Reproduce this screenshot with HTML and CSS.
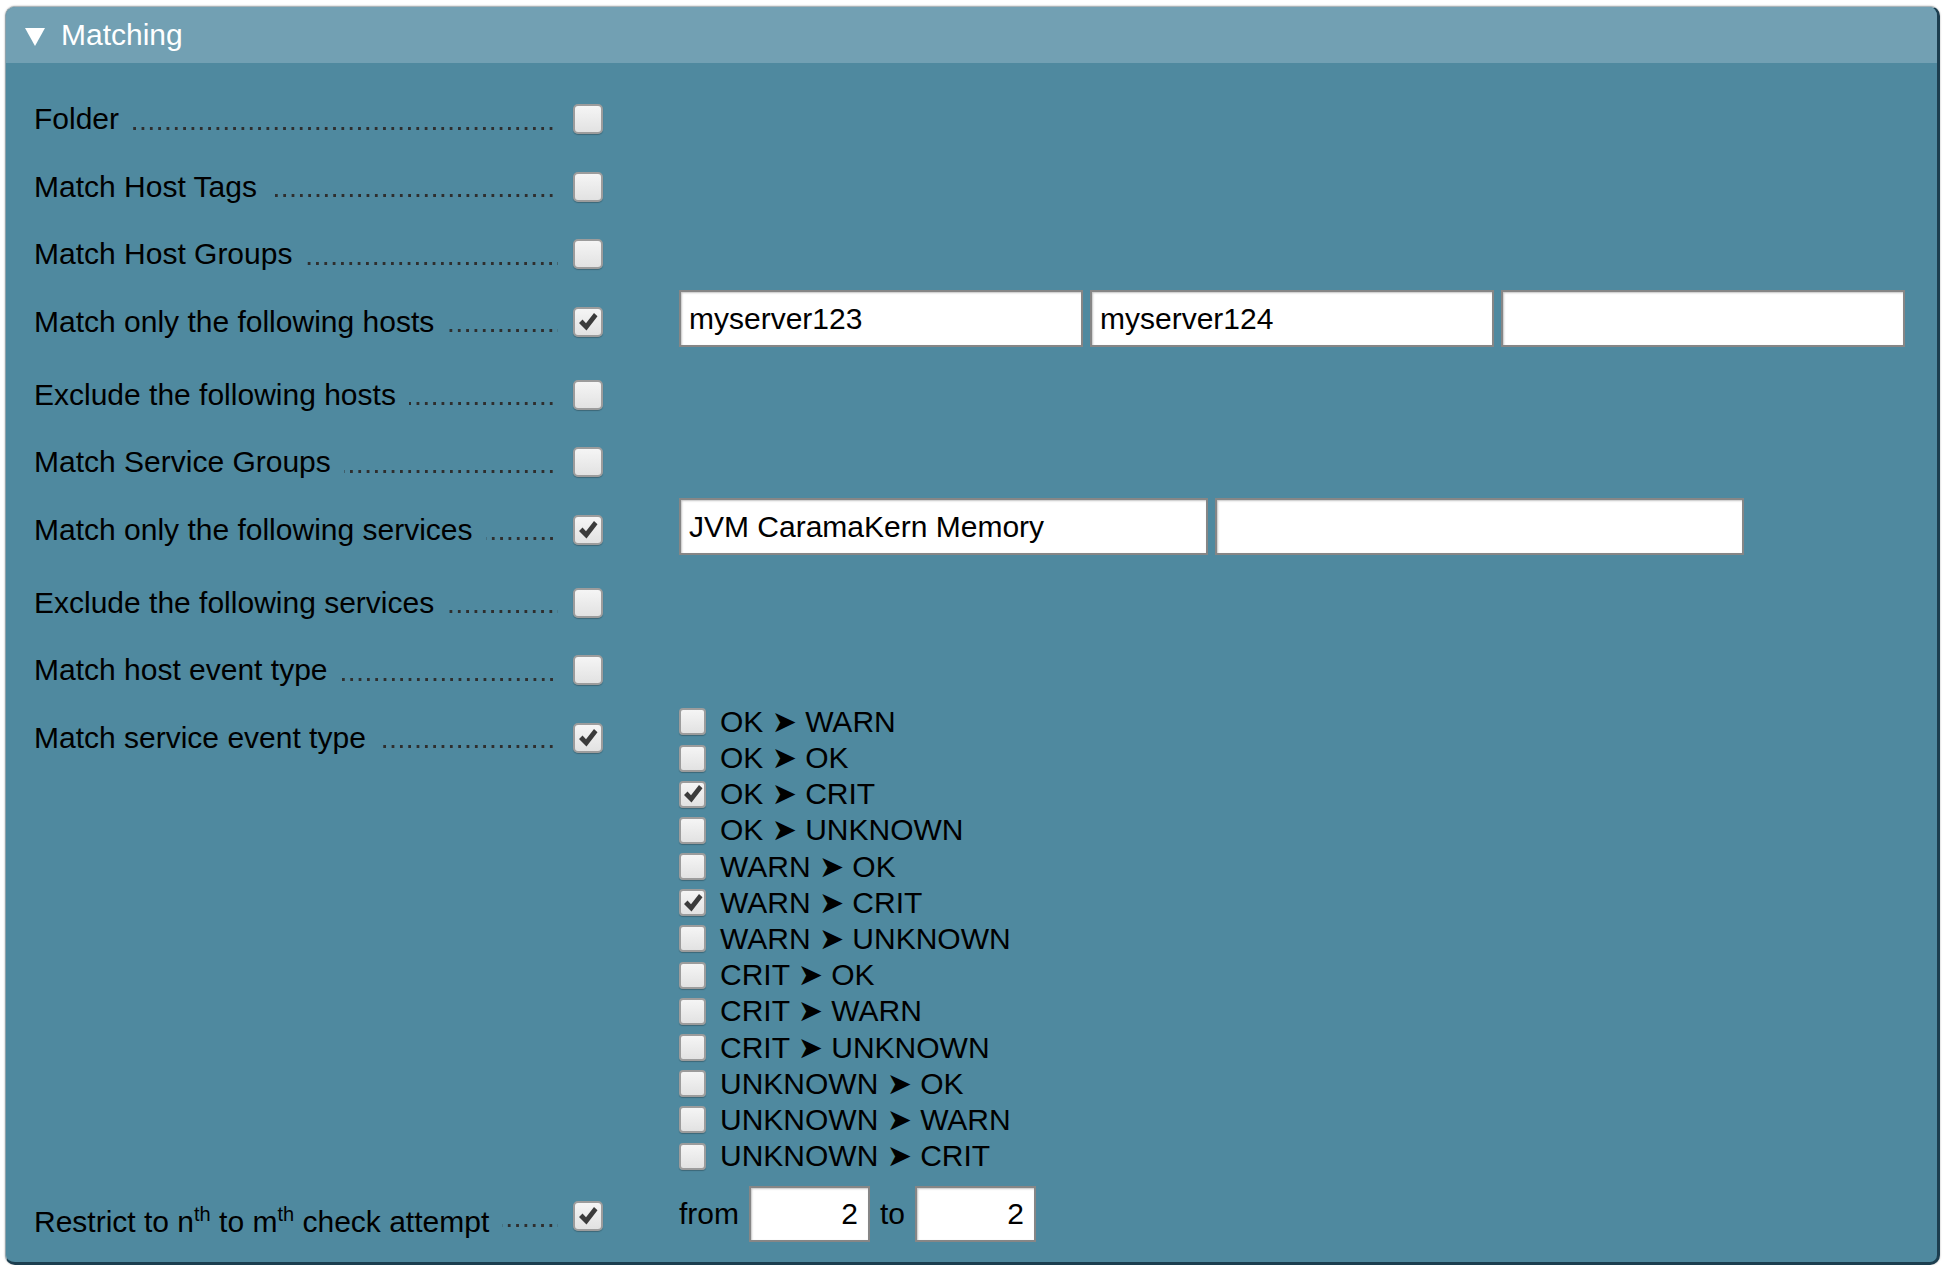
FILE: index.html
```html
<!DOCTYPE html>
<html>
<head>
<meta charset="utf-8">
<link rel="stylesheet" href="styles.css">
</head>
<body>
<div class="panel">
  <div class="head"><span class="tri"></span><span class="htitle">Matching</span></div>
  <div class="body">

    <div class="row">
      <div class="legend"><span class="title">Folder</span><span class="dots"></span><span class="cb"></span></div>
    </div>
    <div class="row">
      <div class="legend"><span class="title">Match Host Tags</span><span class="dots"></span><span class="cb"></span></div>
    </div>
    <div class="row">
      <div class="legend"><span class="title">Match Host Groups</span><span class="dots"></span><span class="cb"></span></div>
    </div>
    <div class="row inputs">
      <div class="legend"><span class="title">Match only the following hosts</span><span class="dots"></span><span class="cb on"><svg viewBox="0 0 20 20"><polygon points="1,11 4.5,7.5 8,11.2 16,1 19.5,4.2 8.5,18.5"/></svg></span></div>
      <div class="content">
        <input class="txt host" type="text" value="myserver123">
        <input class="txt host" type="text" value="myserver124">
        <input class="txt host" type="text" value="">
      </div>
    </div>
    <div class="row">
      <div class="legend"><span class="title">Exclude the following hosts</span><span class="dots"></span><span class="cb"></span></div>
    </div>
    <div class="row">
      <div class="legend"><span class="title">Match Service Groups</span><span class="dots"></span><span class="cb"></span></div>
    </div>
    <div class="row inputs">
      <div class="legend"><span class="title">Match only the following services</span><span class="dots"></span><span class="cb on"><svg viewBox="0 0 20 20"><polygon points="1,11 4.5,7.5 8,11.2 16,1 19.5,4.2 8.5,18.5"/></svg></span></div>
      <div class="content">
        <input class="txt svc" type="text" value="JVM CaramaKern Memory">
        <input class="txt svc" type="text" value="">
      </div>
    </div>
    <div class="row">
      <div class="legend"><span class="title">Exclude the following services</span><span class="dots"></span><span class="cb"></span></div>
    </div>
    <div class="row">
      <div class="legend"><span class="title">Match host event type</span><span class="dots"></span><span class="cb"></span></div>
    </div>
    <div class="row">
      <div class="legend"><span class="title">Match service event type</span><span class="dots"></span><span class="cb on"><svg viewBox="0 0 20 20"><polygon points="1,11 4.5,7.5 8,11.2 16,1 19.5,4.2 8.5,18.5"/></svg></span></div>
      <div class="content list">
        <div class="item"><span class="cb small"></span><span class="itext">OK <span class="arr">➤</span> WARN</span></div>
        <div class="item"><span class="cb small"></span><span class="itext">OK <span class="arr">➤</span> OK</span></div>
        <div class="item"><span class="cb small on"><svg viewBox="0 0 20 20"><polygon points="1,11 4.5,7.5 8,11.2 16,1 19.5,4.2 8.5,18.5"/></svg></span><span class="itext">OK <span class="arr">➤</span> CRIT</span></div>
        <div class="item"><span class="cb small"></span><span class="itext">OK <span class="arr">➤</span> UNKNOWN</span></div>
        <div class="item"><span class="cb small"></span><span class="itext">WARN <span class="arr">➤</span> OK</span></div>
        <div class="item"><span class="cb small on"><svg viewBox="0 0 20 20"><polygon points="1,11 4.5,7.5 8,11.2 16,1 19.5,4.2 8.5,18.5"/></svg></span><span class="itext">WARN <span class="arr">➤</span> CRIT</span></div>
        <div class="item"><span class="cb small"></span><span class="itext">WARN <span class="arr">➤</span> UNKNOWN</span></div>
        <div class="item"><span class="cb small"></span><span class="itext">CRIT <span class="arr">➤</span> OK</span></div>
        <div class="item"><span class="cb small"></span><span class="itext">CRIT <span class="arr">➤</span> WARN</span></div>
        <div class="item"><span class="cb small"></span><span class="itext">CRIT <span class="arr">➤</span> UNKNOWN</span></div>
        <div class="item"><span class="cb small"></span><span class="itext">UNKNOWN <span class="arr">➤</span> OK</span></div>
        <div class="item"><span class="cb small"></span><span class="itext">UNKNOWN <span class="arr">➤</span> WARN</span></div>
        <div class="item"><span class="cb small"></span><span class="itext">UNKNOWN <span class="arr">➤</span> CRIT</span></div>
      </div>
    </div>
    <div class="row last">
      <div class="legend"><span class="title sup-title">Restrict to n<sup>th</sup> to m<sup>th</sup> check attempt</span><span class="dots"></span><span class="cb on"><svg viewBox="0 0 20 20"><polygon points="1,11 4.5,7.5 8,11.2 16,1 19.5,4.2 8.5,18.5"/></svg></span></div>
      <div class="content range">
        <span class="rtext">from</span>
        <input class="txt num" type="text" value="2">
        <span class="rtext">to</span>
        <input class="txt num" type="text" value="2">
      </div>
    </div>

  </div>
</div>
</body>
</html>
```

FILE: styles.css
```css
html, body {
  margin: 0;
  padding: 0;
  background: #ffffff;
}

body {
  font-family: "Liberation Sans", Arial, "DejaVu Sans", sans-serif;
  color: #000;
}

.panel {
  margin: 6px 7px 0 5px;
  border-top: 1px solid #a9b4b9;
  border-left: 1px solid #8fa3ac;
  border-right: 3px solid #1c3e4f;
  border-bottom: 3px solid #1c3e4f;
  border-radius: 10px;
  box-shadow: 0 0 2px rgba(0, 0, 0, 0.35);
  background: #4f899f;
  overflow: hidden;
}

.head {
  height: 56px;
  background: #72a0b3;
  display: flex;
  align-items: center;
  padding-left: 19px;
}

.tri {
  width: 0;
  height: 0;
  border-left: 10.5px solid transparent;
  border-right: 10.5px solid transparent;
  border-top: 18px solid #ffffff;
  margin-top: 4px;
}

.htitle {
  color: #ffffff;
  font-size: 30px;
  margin-left: 16px;
  line-height: 34px;
}

.body {
  padding: 22.25px 0 16px 28px;
}

.row {
  display: flex;
  align-items: flex-start;
  min-height: 67.5px;
}

.row.inputs {
  height: 73px;
}

.legend {
  flex: none;
  width: 569px;
  height: 67.5px;
  display: flex;
  align-items: center;
}

.title {
  font-size: 30px;
  line-height: 34px;
  white-space: nowrap;
}

.dots {
  flex: 1;
  height: 34px;
  margin: 0 15px 0 13px;
  background-image: linear-gradient(to right, #2e2e2e 0, #2e2e2e 3px, transparent 3px);
  background-size: 8.34px 3px;
  background-repeat: repeat-x;
  background-position: right 0 top 24.5px;
}

.cb {
  flex: none;
  box-sizing: border-box;
  width: 30px;
  height: 30px;
  border: 2px solid #9c9c9c;
  border-radius: 5px;
  background: linear-gradient(#f5f5f5, #e2e2e2);
  box-shadow: 0 1px 1px rgba(0, 0, 0, 0.25);
  display: flex;
  align-items: center;
  justify-content: center;
}

.cb svg {
  width: 20px;
  height: 20px;
  fill: #3b3b3b;
}

.cb.small {
  width: 27px;
  height: 27px;
  border-radius: 4px;
}

.content {
  margin-left: 76px;
}

.row.inputs .content {
  padding-top: 2.5px;
  display: flex;
  gap: 7px;
}

.txt {
  box-sizing: border-box;
  height: 57px;
  border: 2px solid #868686;
  box-shadow: inset 1px 1px 2px #c4c4c4;
  background: #ffffff;
  font-family: "Liberation Sans", Arial, sans-serif;
  font-size: 30px;
  color: #000;
  padding: 0 8px;
  margin: 0;
  outline: none;
  border-radius: 0;
}

.txt.host {
  width: 404px;
}

.txt.svc {
  width: 529px;
}

.list .item {
  height: 36.2px;
  display: flex;
  align-items: center;
}

.itext {
  font-size: 30px;
  line-height: 34px;
  margin-left: 14px;
  white-space: nowrap;
}

.arr {
  font-family: "DejaVu Sans", sans-serif;
  font-size: 30px;
  line-height: 30px;
}

.row.last {
  padding-top: 12px;
  min-height: 0;
}

.row.last .legend {
  height: 60px;
}

.sup-title {
  padding-top: 12px;
}

.sup-title sup {
  font-size: 20px;
  line-height: 0;
}

.range {
  display: flex;
  align-items: baseline;
  gap: 10px;
}

.rtext {
  font-size: 30px;
}

.txt.num {
  width: 121px;
  height: 56px;
  text-align: right;
  padding-right: 10px;
}
```
